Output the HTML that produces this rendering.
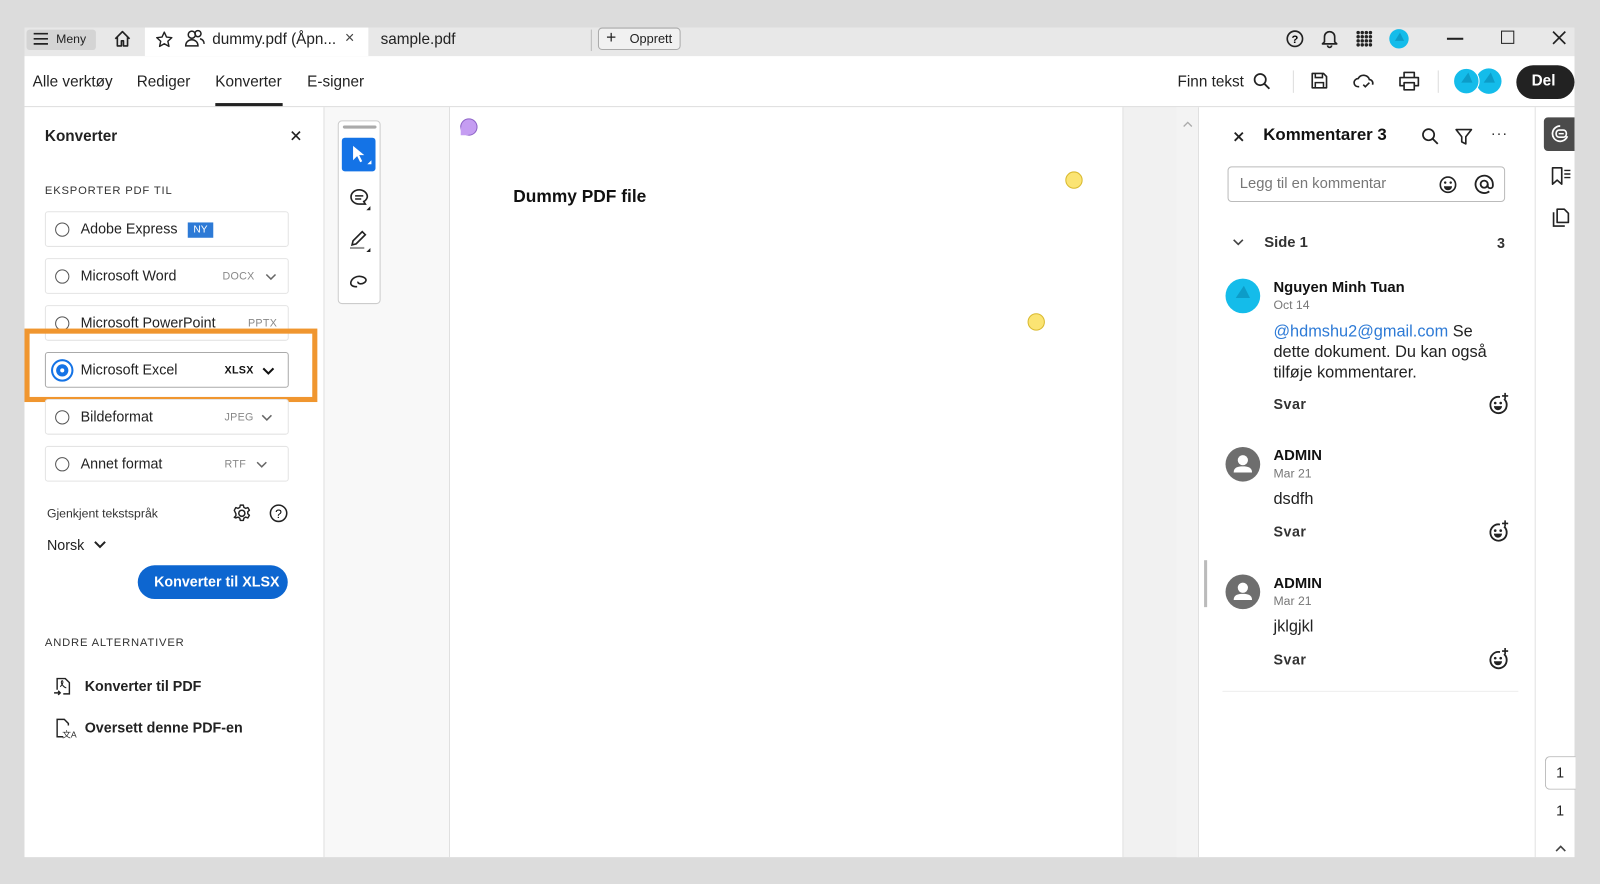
<!DOCTYPE html>
<html><head><meta charset="utf-8"><style>
*{box-sizing:border-box;margin:0;padding:0}
html,body{width:1600px;height:884px;overflow:hidden;background:#dcdcdc;font-family:"Liberation Sans",Arial,sans-serif;color:#222}
#w{position:absolute;left:0;top:0;width:1568px;height:866px;transform:scale(1.020408);transform-origin:0 0}
.a{position:absolute}
svg{position:absolute;overflow:visible}
.t{position:absolute;white-space:nowrap}
.opt{position:absolute;left:44px;width:239px;height:35px;border:1px solid #e4e4e4;border-radius:3px;background:#fff}
.opt .r{position:absolute;left:9px;top:10px;width:14px;height:14px;border:1.6px solid #555;border-radius:50%}
.opt .l{position:absolute;left:34px;top:8px;font-size:14px;color:#222}
.opt .f{position:absolute;top:11px;font-size:10.5px;color:#888;letter-spacing:.3px}
.sm{font-size:11px;letter-spacing:.8px;color:#333}
.cm{font-size:16px;color:#222}
.nm{font-weight:bold;font-size:14.5px;color:#111}
.dt{font-size:12px;color:#777}
.sv{font-weight:bold;font-size:14px;color:#333;letter-spacing:.5px}
</style></head><body><div id="w">
<div class="a" style="left:24px;top:27px;width:1519px;height:28px;background:#e8e8e8"></div>
<div class="a" style="left:24px;top:55px;width:1519px;height:50px;background:#fff;border-bottom:1px solid #ddd"></div>
<div class="a" style="left:24px;top:105px;width:294px;height:735px;background:#fff;border-right:1px solid #e0e0e0"></div>
<div class="a" style="left:318px;top:105px;width:123px;height:735px;background:#f8f8f8;border-right:1px solid #e0e0e0"></div>
<div class="a" style="left:441px;top:105px;width:659px;height:735px;background:#fff"></div>
<div class="a" style="left:1100px;top:105px;width:74px;height:735px;background:#f1f1f1;border-left:1px solid #e2e2e2"></div>
<div class="a" style="left:1153px;top:105px;width:21px;height:735px;background:#f3f3f3"></div>
<div class="a" style="left:1174px;top:105px;width:331px;height:735px;background:#fff;border-left:1px solid #e0e0e0;border-right:1px solid #e0e0e0"></div>
<div class="a" style="left:1505px;top:105px;width:38px;height:735px;background:#fff"></div>

<div class="a" style="left:26px;top:29px;width:68px;height:20px;background:#d4d4d4;border-radius:3px"></div>
<svg style="left:33px;top:32px" width="14" height="12"><path d="M0 1h14M0 6h14M0 11h14" stroke="#222" stroke-width="1.6"/></svg>
<div class="t" style="left:55px;top:31px;font-size:12px">Meny</div>
<svg style="left:111px;top:29px" width="18" height="18" viewBox="0 0 18 18"><path d="M2 9L9 2l7 7M4 7v9h4v-5h2v5h4V7" fill="none" stroke="#222" stroke-width="1.6" stroke-linejoin="round"/></svg>
<div class="a" style="left:142px;top:27px;width:219px;height:28px;background:#fff"></div>
<svg style="left:152px;top:30px" width="18" height="18" viewBox="0 0 18 18"><path d="M9 1.5l2.2 4.8 5.2.6-3.9 3.5 1.1 5.1L9 12.9l-4.6 2.6 1.1-5.1L1.6 6.9l5.2-.6z" fill="none" stroke="#222" stroke-width="1.4" stroke-linejoin="round"/></svg>
<svg style="left:181px;top:29px" width="20" height="18" viewBox="0 0 20 18"><circle cx="7" cy="5" r="3.5" fill="none" stroke="#222" stroke-width="1.5"/><path d="M1 16c0-4 3-6 6-6s6 2 6 6z" fill="none" stroke="#222" stroke-width="1.5"/><circle cx="13" cy="4" r="3" fill="none" stroke="#222" stroke-width="1.5"/><path d="M15 9c2 .5 4 2 4 5" fill="none" stroke="#222" stroke-width="1.5"/></svg>
<div class="t" style="left:208px;top:30px;font-size:15px">dummy.pdf (Åpn...</div>
<div class="t" style="left:338px;top:29px;font-size:16px;color:#444">×</div>
<div class="t" style="left:373px;top:30px;font-size:15px">sample.pdf</div>
<div class="a" style="left:579px;top:29px;width:1px;height:21px;background:#bbb"></div>
<div class="a" style="left:586px;top:27px;width:81px;height:22px;border:1px solid #aaa;border-radius:4px;background:#f1f1f1"></div>
<div class="t" style="left:594px;top:27px;font-size:17px">+</div>
<div class="t" style="left:617px;top:31px;font-size:12.5px">Opprett</div>
<svg style="left:1260px;top:29px" width="18" height="18"><circle cx="9" cy="9" r="7.5" fill="none" stroke="#222" stroke-width="1.6"/><text x="9" y="13" font-size="11" font-weight="bold" text-anchor="middle" font-family="Liberation Sans">?</text></svg>
<svg style="left:1295px;top:28px" width="16" height="19"><path d="M3 13V8a5 5 0 0110 0v5l2 2H1z M6 16.5a2 2 0 004 0" fill="none" stroke="#222" stroke-width="1.6" stroke-linejoin="round"/></svg>
<svg style="left:1329px;top:30px" width="16" height="16"><g fill="#222"><circle cx="2" cy="2" r="1.7"/><circle cx="6" cy="2" r="1.7"/><circle cx="10" cy="2" r="1.7"/><circle cx="14" cy="2" r="1.7"/><circle cx="2" cy="6" r="1.7"/><circle cx="6" cy="6" r="1.7"/><circle cx="10" cy="6" r="1.7"/><circle cx="14" cy="6" r="1.7"/><circle cx="2" cy="10" r="1.7"/><circle cx="6" cy="10" r="1.7"/><circle cx="10" cy="10" r="1.7"/><circle cx="14" cy="10" r="1.7"/><circle cx="2" cy="14" r="1.7"/><circle cx="6" cy="14" r="1.7"/><circle cx="10" cy="14" r="1.7"/><circle cx="14" cy="14" r="1.7"/></g></svg>
<svg style="left:1361px;top:28px" width="20" height="20"><circle cx="10" cy="10" r="9.5" fill="#14bcea"/><path d="M6 12L11 4l4 8z" fill="#0c9cc8"/></svg>
<div class="a" style="left:1418px;top:37px;width:16px;height:2px;background:#222"></div>
<div class="a" style="left:1471px;top:30px;width:13px;height:13px;border:1.5px solid #222"></div>
<svg style="left:1521px;top:30px" width="14" height="14"><path d="M1 1l12 12M13 1L1 13" stroke="#222" stroke-width="1.6"/></svg>

<div class="t" style="left:32px;top:72px;font-size:15px">Alle verktøy</div>
<div class="t" style="left:134px;top:72px;font-size:15px">Rediger</div>
<div class="t" style="left:211px;top:72px;font-size:15px">Konverter</div>
<div class="a" style="left:211px;top:101px;width:66px;height:3px;background:#222"></div>
<div class="t" style="left:301px;top:72px;font-size:15px">E-signer</div>
<div class="t" style="left:1154px;top:72px;font-size:15px">Finn tekst</div>
<svg style="left:1228px;top:71px" width="18" height="18"><circle cx="7" cy="7" r="5.5" fill="none" stroke="#222" stroke-width="1.7"/><path d="M11 11l5 5" stroke="#222" stroke-width="1.8"/></svg>
<div class="a" style="left:1267px;top:69px;width:1px;height:22px;background:#ddd"></div>
<svg style="left:1284px;top:70px" width="18" height="18"><path d="M2 2h11l3 3v11H2z" fill="none" stroke="#222" stroke-width="1.6" stroke-linejoin="round"/><path d="M5 2v4h7V2M5 16v-5h8v5" fill="none" stroke="#222" stroke-width="1.5"/></svg>
<svg style="left:1326px;top:71px" width="22" height="17"><path d="M6 14H5a4 4 0 010-8 6 6 0 0111 1 3.5 3.5 0 013 5" fill="none" stroke="#222" stroke-width="1.6"/><path d="M10 12l2 2 4-4" fill="none" stroke="#222" stroke-width="1.6"/></svg>
<svg style="left:1371px;top:70px" width="20" height="19"><path d="M5 6V1h10v5M5 14H1V6h18v8h-4M5 11h10v7H5z" fill="none" stroke="#222" stroke-width="1.6" stroke-linejoin="round"/></svg>
<div class="a" style="left:1409px;top:69px;width:1px;height:22px;background:#ddd"></div>
<svg style="left:1424px;top:66px" width="48" height="27"><circle cx="35" cy="13.5" r="12.5" fill="#14bcea"/><path d="M30 15L37 5l4 10z" fill="#0c9cc8"/><circle cx="13" cy="13.5" r="12.5" fill="#14bcea" stroke="#fff" stroke-width="1"/><path d="M8 15L15 5l4 10z" fill="#0c9cc8"/></svg>
<div class="a" style="left:1486px;top:64px;width:57px;height:33px;background:#222;border-radius:17px"></div>
<div class="t" style="left:1501px;top:71px;font-size:15px;font-weight:bold;color:#fff">Del</div>

<div class="t" style="left:44px;top:125px;font-size:15px;font-weight:bold">Konverter</div>
<svg style="left:285px;top:128px" width="10" height="10"><path d="M1 1l8 8M9 1L1 9" stroke="#222" stroke-width="1.6"/></svg>
<div class="t sm" style="left:44px;top:181px">EKSPORTER PDF TIL</div>
<div class="opt" style="top:207px"><div class="r"></div><div class="l">Adobe Express</div><div class="a" style="left:139px;top:10px;width:25px;height:15px;background:#2d7ad6;color:#fff;font-size:10px;text-align:center;line-height:15px">NY</div></div>
<div class="opt" style="top:253px"><div class="r"></div><div class="l">Microsoft Word</div><div class="f" style="left:173px">DOCX</div><svg style="left:215px;top:14px" width="11" height="7"><path d="M1 1l4.5 4.5L10 1" fill="none" stroke="#666" stroke-width="1.5"/></svg></div>
<div class="opt" style="top:299px"><div class="r"></div><div class="l">Microsoft PowerPoint</div><div class="f" style="left:198px">PPTX</div></div>
<div class="opt" style="top:345px;border-color:#aaa"><div class="a" style="left:5px;top:6px;width:22px;height:22px;border:2px solid #1473e6;border-radius:50%"></div><div class="a" style="left:10px;top:11px;width:12px;height:12px;background:#1473e6;border-radius:50%"></div><div class="a" style="left:14px;top:15px;width:4px;height:4px;background:#fff;border-radius:50%"></div><div class="l">Microsoft Excel</div><div class="f" style="left:175px;color:#111;font-weight:bold">XLSX</div><svg style="left:212px;top:14px" width="12" height="8"><path d="M1 1l5 5 5-5" fill="none" stroke="#111" stroke-width="2"/></svg></div>
<div class="a" style="left:24px;top:322px;width:287px;height:72px;border:5px solid #f0962f"></div>
<div class="opt" style="top:391px"><div class="r"></div><div class="l">Bildeformat</div><div class="f" style="left:175px">JPEG</div><svg style="left:211px;top:14px" width="11" height="7"><path d="M1 1l4.5 4.5L10 1" fill="none" stroke="#666" stroke-width="1.5"/></svg></div>
<div class="opt" style="top:437px"><div class="r"></div><div class="l">Annet format</div><div class="f" style="left:175px">RTF</div><svg style="left:206px;top:14px" width="11" height="7"><path d="M1 1l4.5 4.5L10 1" fill="none" stroke="#666" stroke-width="1.5"/></svg></div>
<div class="t" style="left:46px;top:496px;font-size:12px;color:#333">Gjenkjent tekstspråk</div>
<svg style="left:228px;top:494px" width="18" height="18" viewBox="0 0 18 18"><circle cx="9" cy="9" r="3" fill="none" stroke="#222" stroke-width="1.5"/><path d="M7.5 1h3l.5 2.2 1.8 1 2.1-.8 1.5 2.6-1.6 1.5v2l1.6 1.5-1.5 2.6-2.1-.8-1.8 1-.5 2.2h-3l-.5-2.2-1.8-1-2.1.8L1.6 13l1.6-1.5v-2L1.6 6.1 3.1 3.4l2.1.8 1.8-1z" fill="none" stroke="#222" stroke-width="1.4" stroke-linejoin="round"/></svg>
<svg style="left:264px;top:494px" width="18" height="18"><circle cx="9" cy="9" r="8" fill="none" stroke="#222" stroke-width="1.5"/><text x="9" y="13.5" font-size="12" text-anchor="middle" font-family="Liberation Sans">?</text></svg>
<div class="t" style="left:46px;top:526px;font-size:14px">Norsk</div>
<svg style="left:92px;top:530px" width="12" height="8"><path d="M1 1l5 5 5-5" fill="none" stroke="#222" stroke-width="2"/></svg>
<div class="a" style="left:135px;top:554px;width:147px;height:33px;background:#0d66d0;border-radius:17px"></div>
<div class="t" style="left:151px;top:562px;font-size:14px;font-weight:bold;color:#fff">Konverter til XLSX</div>
<div class="t sm" style="left:44px;top:624px">ANDRE ALTERNATIVER</div>
<svg style="left:52px;top:663px" width="19" height="19"><path d="M4 13V2h8l4 4v11h-6" fill="none" stroke="#222" stroke-width="1.4"/><path d="M7 10c2-2 3-4 2.5-5.5S7 5 9 8s4 3 4 3" fill="none" stroke="#222" stroke-width="1"/><path d="M1 16h6M5 14l2 2-2 2" fill="none" stroke="#222" stroke-width="1.4"/></svg>
<div class="t" style="left:83px;top:664px;font-size:14px;font-weight:bold;color:#222">Konverter til PDF</div>
<svg style="left:54px;top:704px" width="20" height="20"><path d="M8 18H2V1h7l4 4v2" fill="none" stroke="#222" stroke-width="1.4"/><text x="7" y="19" font-size="8.5" font-family="Liberation Sans" fill="#222">文A</text></svg>
<div class="t" style="left:83px;top:705px;font-size:14px;font-weight:bold;color:#222">Oversett denne PDF-en</div>

<div class="a" style="left:331px;top:118px;width:42px;height:180px;border:1px solid #ccc;border-radius:4px;background:#fff"></div>
<div class="a" style="left:336px;top:123px;width:33px;height:3px;background:#aaa;border-radius:2px"></div>
<div class="a" style="left:335px;top:135px;width:33px;height:33px;background:#1473e6;border-radius:3px"></div>
<svg style="left:345px;top:142px" width="20" height="20"><path d="M1 1v14l4-4 3 6 2-1-3-6h5z" fill="#fff"/><path d="M19 15v4h-4z" fill="#fff"/></svg>
<svg style="left:342px;top:184px" width="22" height="22"><path d="M10 2a8 7 0 100 14h6l-1.5-2.5A7 7 0 0018 9 8 7 0 0010 2z" fill="none" stroke="#222" stroke-width="1.6"/><path d="M6 8h8M6 11h6" stroke="#222" stroke-width="1.5"/><path d="M21 18v4h-4z" fill="#222"/></svg>
<svg style="left:342px;top:225px" width="22" height="22"><path d="M3 15l1-4L13 2l3 3-9 9z" fill="none" stroke="#222" stroke-width="1.6"/><path d="M1 18h14" stroke="#999" stroke-width="2"/><path d="M21 18v4h-4z" fill="#222"/></svg>
<svg style="left:342px;top:268px" width="20" height="16"><path d="M8 13c-5 0-7-2-6-5s5-6 10-5 6 4 3 6-7 1-6-1" fill="none" stroke="#222" stroke-width="1.6"/></svg>

<svg style="left:450px;top:115px" width="19" height="19"><circle cx="9.5" cy="9.5" r="8" fill="#c59df2" stroke="#8d63c7" stroke-width="1"/><path d="M1.5 9.5v8h8" fill="#c59df2"/></svg>
<div class="t" style="left:503px;top:183px;font-size:17px;font-weight:bold;color:#111">Dummy PDF file</div>
<svg style="left:1043px;top:167px" width="19" height="19"><circle cx="9.5" cy="9.5" r="8" fill="#fbe473" stroke="#d9b92e" stroke-width="1"/></svg>
<svg style="left:1006px;top:306px" width="19" height="19"><circle cx="9.5" cy="9.5" r="8" fill="#fbe473" stroke="#d9b92e" stroke-width="1"/></svg>
<svg style="left:1159px;top:119px" width="10" height="6"><path d="M1 5l4-4 4 4" fill="none" stroke="#aaa" stroke-width="1.3"/></svg>
<div class="a" style="left:1180px;top:549px;width:3px;height:46px;background:#bbb"></div>

<svg style="left:1209px;top:129px" width="10" height="10"><path d="M1 1l8 8M9 1L1 9" stroke="#222" stroke-width="1.8"/></svg>
<div class="t" style="left:1238px;top:123px;font-size:16.5px;font-weight:bold;color:#111">Kommentarer 3</div>
<svg style="left:1393px;top:125px" width="18" height="18"><circle cx="7" cy="7" r="5.5" fill="none" stroke="#222" stroke-width="1.7"/><path d="M11 11l5 5" stroke="#222" stroke-width="1.8"/></svg>
<svg style="left:1426px;top:126px" width="17" height="17"><path d="M1 1h15l-5.5 7v7l-4-2V8z" fill="none" stroke="#222" stroke-width="1.6" stroke-linejoin="round"/></svg>
<div class="t" style="left:1461px;top:122px;font-size:14px;letter-spacing:1px">···</div>
<div class="a" style="left:1203px;top:163px;width:272px;height:35px;border:1px solid #bbb;border-radius:4px"></div>
<div class="t" style="left:1215px;top:172px;font-size:14.5px;color:#777">Legg til en kommentar</div>
<svg style="left:1410px;top:172px" width="18" height="18"><circle cx="9" cy="9" r="7.5" fill="none" stroke="#222" stroke-width="1.6"/><circle cx="6.3" cy="7" r="1.2" fill="#222"/><circle cx="11.7" cy="7" r="1.2" fill="#222"/><path d="M5 10.5a4 4 0 008 0z" fill="#222"/></svg>
<svg style="left:1445px;top:171px" width="19" height="19"><circle cx="9.5" cy="9.5" r="3.5" fill="none" stroke="#222" stroke-width="1.8"/><path d="M13 9.5v1.5a2.5 2.5 0 005 0v-1.5a8.5 8.5 0 10-3.5 7" fill="none" stroke="#222" stroke-width="1.8"/></svg>
<svg style="left:1208px;top:234px" width="11" height="7"><path d="M1 1l4.5 4.5L10 1" fill="none" stroke="#444" stroke-width="1.6"/></svg>
<div class="t" style="left:1239px;top:230px;font-size:14.5px;font-weight:bold;color:#333">Side 1</div>
<div class="t" style="left:1467px;top:230px;font-size:14px;font-weight:bold;color:#333">3</div>

<svg style="left:1201px;top:273px" width="34" height="34"><circle cx="17" cy="17" r="17" fill="#14bcea"/><path d="M10 19L18 7l6 12z" fill="#0c9cc8"/></svg>
<div class="t nm" style="left:1248px;top:274px">Nguyen Minh Tuan</div>
<div class="t dt" style="left:1248px;top:292px">Oct 14</div>
<div class="a cm" style="left:1248px;top:316px;width:228px;line-height:20px"><span style="color:#2d7ad6">@hdmshu2@gmail.com</span> Se dette dokument. Du kan også tilføje kommentarer.</div>
<div class="t sv" style="left:1248px;top:388px">Svar</div>
<svg style="left:1458px;top:385px" width="22" height="22"><path d="M16 6a8 8 0 11-4-2" fill="none" stroke="#222" stroke-width="1.8"/><circle cx="7.3" cy="10" r="1.3" fill="#222"/><circle cx="12.7" cy="10" r="1.3" fill="#222"/><path d="M6 13a4 4 0 008 0z" fill="#222"/><path d="M17 0v6M14 3h6" stroke="#222" stroke-width="1.6"/></svg>

<svg style="left:1201px;top:438px" width="34" height="34"><circle cx="17" cy="17" r="17" fill="#6e6e6e"/><circle cx="17" cy="13" r="5" fill="#fff"/><path d="M8 25c0-5 4-6 9-6s9 1 9 6z" fill="#fff"/></svg>
<div class="t nm" style="left:1248px;top:439px">ADMIN</div>
<div class="t dt" style="left:1248px;top:457px">Mar 21</div>
<div class="t cm" style="left:1248px;top:481px">dsdfh</div>
<div class="t sv" style="left:1248px;top:513px">Svar</div>
<svg style="left:1458px;top:510px" width="22" height="22"><path d="M16 6a8 8 0 11-4-2" fill="none" stroke="#222" stroke-width="1.8"/><circle cx="7.3" cy="10" r="1.3" fill="#222"/><circle cx="12.7" cy="10" r="1.3" fill="#222"/><path d="M6 13a4 4 0 008 0z" fill="#222"/><path d="M17 0v6M14 3h6" stroke="#222" stroke-width="1.6"/></svg>

<svg style="left:1201px;top:563px" width="34" height="34"><circle cx="17" cy="17" r="17" fill="#6e6e6e"/><circle cx="17" cy="13" r="5" fill="#fff"/><path d="M8 25c0-5 4-6 9-6s9 1 9 6z" fill="#fff"/></svg>
<div class="t nm" style="left:1248px;top:564px">ADMIN</div>
<div class="t dt" style="left:1248px;top:582px">Mar 21</div>
<div class="t cm" style="left:1248px;top:606px">jklgjkl</div>
<div class="t sv" style="left:1248px;top:638px">Svar</div>
<svg style="left:1458px;top:635px" width="22" height="22"><path d="M16 6a8 8 0 11-4-2" fill="none" stroke="#222" stroke-width="1.8"/><circle cx="7.3" cy="10" r="1.3" fill="#222"/><circle cx="12.7" cy="10" r="1.3" fill="#222"/><path d="M6 13a4 4 0 008 0z" fill="#222"/><path d="M17 0v6M14 3h6" stroke="#222" stroke-width="1.6"/></svg>
<div class="a" style="left:1198px;top:677px;width:290px;height:1px;background:#eee"></div>

<div class="a" style="left:1513px;top:115px;width:30px;height:33px;background:#4b4b4b;border-radius:4px 0 0 4px"></div>
<svg style="left:1520px;top:122px" width="18" height="18"><path d="M9 1.5a7.5 7.5 0 107 10" fill="none" stroke="#fff" stroke-width="1.7"/><rect x="5" y="5.5" width="10" height="7" rx="3" fill="none" stroke="#fff" stroke-width="1.6"/><path d="M7.5 9h5" stroke="#fff" stroke-width="1.4"/></svg>
<svg style="left:1520px;top:163px" width="20" height="19"><path d="M1.5 1.5h9v16l-4.5-4-4.5 4z" fill="none" stroke="#222" stroke-width="1.6" stroke-linejoin="round"/><path d="M13 4h6M13 7.5h6M13 11h6" stroke="#222" stroke-width="1.4"/></svg>
<svg style="left:1521px;top:204px" width="18" height="19"><path d="M1.5 4v13.5h11" fill="none" stroke="#222" stroke-width="1.6"/><path d="M5 1h7l4 4v9H5z" fill="none" stroke="#222" stroke-width="1.6" stroke-linejoin="round"/></svg>
<div class="a" style="left:1514px;top:741px;width:30px;height:33px;border:1px solid #bbb;border-right:none;border-radius:5px 0 0 5px;background:#fff"></div>
<div class="t" style="left:1525px;top:749px;font-size:14px">1</div>
<div class="t" style="left:1525px;top:786px;font-size:14px">1</div>
<svg style="left:1524px;top:828px" width="11" height="7"><path d="M1 6l4.5-4.5L10 6" fill="none" stroke="#444" stroke-width="1.6"/></svg>
</div></body></html>
